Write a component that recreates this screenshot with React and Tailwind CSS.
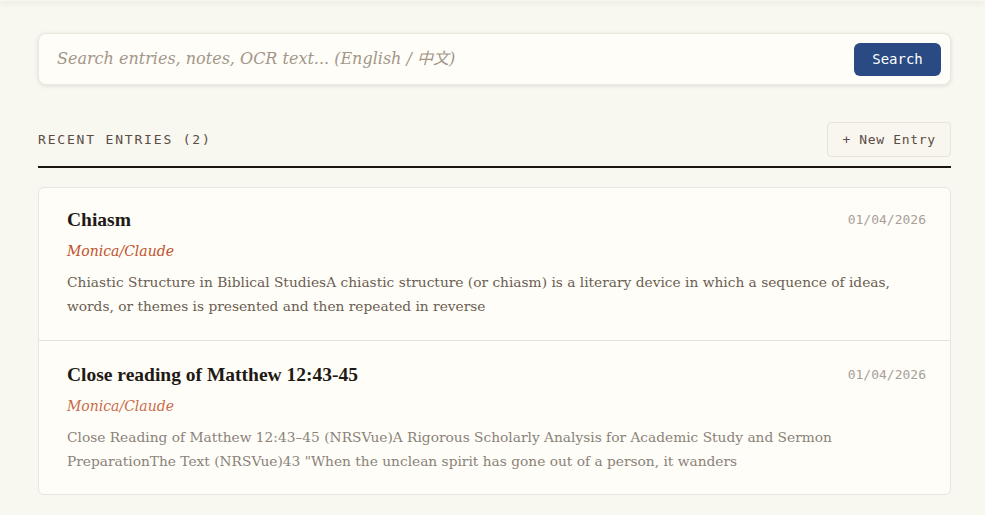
import React, { useState } from 'react';

const serif = { fontFamily: '"DejaVu Serif", "Noto Sans CJK SC", serif' };
const titleFont = { fontFamily: '"Liberation Serif", serif' };
const mono = { fontFamily: '"DejaVu Sans Mono", monospace' };

const entries = [
  {
    title: 'Chiasm',
    author: 'Monica/Claude',
    date: '01/04/2026',
    body: 'Chiastic Structure in Biblical StudiesA chiastic structure (or chiasm) is a literary device in which a sequence of ideas, words, or themes is presented and then repeated in reverse',
    muted: false,
  },
  {
    title: 'Close reading of Matthew 12:43-45',
    author: 'Monica/Claude',
    date: '01/04/2026',
    body: 'Close Reading of Matthew 12:43–45 (NRSVue)A Rigorous Scholarly Analysis for Academic Study and Sermon PreparationThe Text (NRSVue)43 "When the unclean spirit has gone out of a person, it wanders',
    muted: true,
  },
];

const App = () => {
  const [query, setQuery] = useState('');

  return (
    <div className="min-h-screen bg-[#f8f7f0] relative">
      <div className="absolute top-0 left-0 right-0 h-px bg-[#f8f7f0] shadow-[0_0_7px_rgba(60,50,30,0.35)]" />

      <div className="ml-[38px] w-[913px] pt-[33px]">
        <div className="flex items-center h-[52px] bg-[#fefdf7] border border-[#ece8de] rounded-lg shadow-[0_1px_4px_rgba(60,50,30,0.12)] pl-[18px] pr-[9px]">
          <input
            type="text"
            value={query}
            onChange={(e) => setQuery(e.target.value)}
            placeholder="Search entries, notes, OCR text... (English / 中文)"
            className="flex-1 bg-transparent outline-none italic text-[16px] text-[#3a302a] placeholder:text-[#a3968a]"
            style={serif}
          />
          <button className="h-[33px] w-[87px] rounded-md bg-[#294a82] text-white text-[14px]" style={mono}>
            Search
          </button>
        </div>

        <div className="mt-[37px] flex items-center justify-between pb-[9px] border-b-2 border-[#1c1611]">
          <h2 className="text-[13px] tracking-[0.14em] text-[#5b4c44]" style={mono}>
            RECENT ENTRIES (2)
          </h2>
          <button
            className="h-[35px] w-[124px] border border-[#ebe3d8] rounded bg-[#f9f6ef] text-[13px] tracking-[0.05em] text-[#5b4c44]"
            style={mono}
          >
            + New Entry
          </button>
        </div>

        <div className="mt-[19px] bg-[#fefdf7] border border-[#e9e5dc] rounded-md">
          {entries.map((entry, i) => (
            <div
              key={i}
              className={`pl-[28px] pr-[24px] ${i > 0 ? 'border-t border-[#e6e2d9] pt-[22px] pb-[21px]' : 'pt-[20px] pb-[22px]'}`}
            >
              <div className="flex items-center justify-between">
                <h3 className="text-[19.5px] leading-6 font-bold text-[#1f1a16]" style={titleFont}>
                  {entry.title}
                </h3>
                <span className="text-[13px] text-[#a8a099]" style={mono}>
                  {entry.date}
                </span>
              </div>
              <div className={`mt-2 italic text-[14px] leading-[22px] ${entry.muted ? 'text-[#c96c4c]' : 'text-[#c0532f]'}`} style={serif}>
                {entry.author}
              </div>
              <p className={`mt-2 text-[13.75px] leading-6 ${entry.muted ? 'text-[#8b8279]' : 'text-[#6b5d53]'}`} style={serif}>
                {entry.body}
              </p>
            </div>
          ))}
        </div>
      </div>
    </div>
  );
};

export default App;
